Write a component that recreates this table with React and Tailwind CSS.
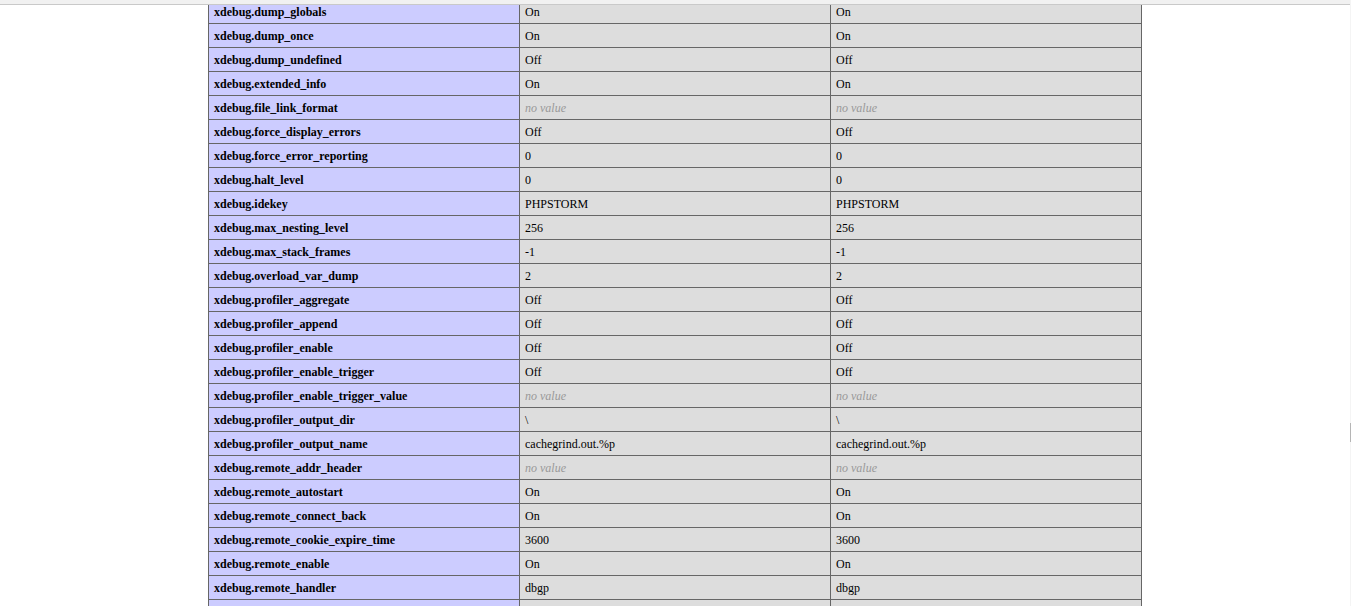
import React from "react";

const rows = [
  ["xdebug.dump_globals", "On"],
  ["xdebug.dump_once", "On"],
  ["xdebug.dump_undefined", "Off"],
  ["xdebug.extended_info", "On"],
  ["xdebug.file_link_format", null],
  ["xdebug.force_display_errors", "Off"],
  ["xdebug.force_error_reporting", "0"],
  ["xdebug.halt_level", "0"],
  ["xdebug.idekey", "PHPSTORM"],
  ["xdebug.max_nesting_level", "256"],
  ["xdebug.max_stack_frames", "-1"],
  ["xdebug.overload_var_dump", "2"],
  ["xdebug.profiler_aggregate", "Off"],
  ["xdebug.profiler_append", "Off"],
  ["xdebug.profiler_enable", "Off"],
  ["xdebug.profiler_enable_trigger", "Off"],
  ["xdebug.profiler_enable_trigger_value", null],
  ["xdebug.profiler_output_dir", "\\"],
  ["xdebug.profiler_output_name", "cachegrind.out.%p"],
  ["xdebug.remote_addr_header", null],
  ["xdebug.remote_autostart", "On"],
  ["xdebug.remote_connect_back", "On"],
  ["xdebug.remote_cookie_expire_time", "3600"],
  ["xdebug.remote_enable", "On"],
  ["xdebug.remote_handler", "dbgp"],
  ["xdebug.remote_host", "localhost"],
  ["xdebug.remote_log", null],
];

function Value({ value }) {
  if (value === null) {
    return <i className="text-[#999]">no value</i>;
  }
  return value;
}

export default function App() {
  return (
    <div className="min-h-screen bg-white pr-px font-['Liberation_Serif',serif] text-black">
      {/* top strip over the scrolled page */}
      <div className="fixed top-0 left-0 right-0 h-[5px] bg-[#f1f1f1] border-b border-[#c9c9c9]" />
      {/* scrollbar hint */}
      <div className="fixed top-0 right-0 bottom-0 w-px bg-[#f4f4f4]" />
      <div className="fixed right-0 top-[423px] h-[19px] w-px bg-[#b5b5b5]" />

      <table className="mx-auto -mt-px w-[934px] table-fixed border-collapse text-[12px] leading-[15px]">
        <tbody>
          {rows.map(([name, value]) => (
            <tr key={name}>
              <td className="w-[311px] border border-[#666] bg-[#ccf] px-[5px] pt-[5px] pb-[3px] align-baseline font-bold">
                {name}
              </td>
              <td className="w-[311px] border border-[#666] bg-[#ddd] px-[5px] pt-[5px] pb-[3px] align-baseline">
                <Value value={value} />
              </td>
              <td className="w-[311px] border border-[#666] bg-[#ddd] px-[5px] pt-[5px] pb-[3px] align-baseline">
                <Value value={value} />
              </td>
            </tr>
          ))}
        </tbody>
      </table>
    </div>
  );
}
